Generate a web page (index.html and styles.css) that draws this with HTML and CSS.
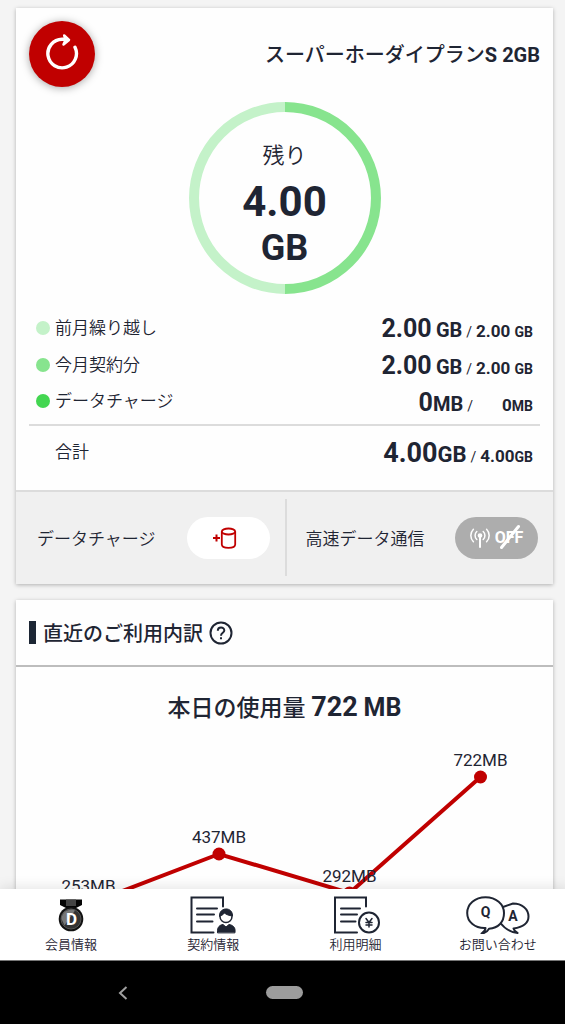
FILE: index.html
```html
<!DOCTYPE html>
<html lang="ja">
<head>
<meta charset="utf-8">
<meta name="viewport" content="width=device-width, initial-scale=1">
<title>データ残量</title>
<link rel="stylesheet" href="styles.css">
</head>
<body>
<main class="content">
  <section class="card">
    <div class="plan">
      <header class="plan-head">
        <button class="refresh" type="button" aria-label="更新">
          <svg width="34" height="38" viewBox="0 0 34 38" fill="none" stroke="#fff" stroke-width="3.4" stroke-linecap="round" stroke-linejoin="round">
            <path d="M30 14.2A14.3 14.3 0 1 1 17 6.200H21"/>
            <path d="M19.200 2.500L24 7L18.500 11.500L20.500 7Z" fill="#fff" stroke-width="2.500"/>
          </svg>
        </button>
        <h1 class="plan-name">スーパーホーダイプラン<b>S 2GB</b></h1>
      </header>
      <div class="donut">
        <svg class="donut-ring" width="192" height="192" viewBox="0 0 192 192" fill="none" stroke-width="10">
          <path d="M96 187A91 91 0 0 1 96 5" stroke="#c4f2c9"/>
          <path d="M96 5A91 91 0 0 1 96 187" stroke="#87e48e"/>
        </svg>
        <p class="donut-text">
          <span class="donut-label">残り</span>
          <span class="donut-value">4.00</span>
          <span class="donut-unit">GB</span>
        </p>
      </div>
      <table class="usage">
        <tbody>
          <tr><th scope="row"><span class="dot dot-carry"></span>前月繰り越し</th><td><b class="num">2.00</b> <b class="unit">GB</b><span class="slash">/</span><span class="cap">2.00 <small>GB</small></span></td></tr>
          <tr><th scope="row"><span class="dot dot-month"></span>今月契約分</th><td><b class="num">2.00</b> <b class="unit">GB</b><span class="slash">/</span><span class="cap">2.00 <small>GB</small></span></td></tr>
          <tr><th scope="row"><span class="dot dot-charge"></span>データチャージ</th><td><b class="num">0</b><b class="unit">MB</b><span class="slash">/</span><span class="cap">0<small>MB</small></span></td></tr>
        </tbody>
        <tfoot>
          <tr><th scope="row"><span class="dot"></span>合計</th><td><b class="num">4.00</b><b class="unit">GB</b><span class="slash">/</span><span class="cap">4.00<small>GB</small></span></td></tr>
        </tfoot>
      </table>
    </div>
    <div class="actions">
      <div class="action">
        <span id="charge-label">データチャージ</span>
        <button class="pill" type="button" aria-labelledby="charge-label">
          <svg width="26" height="22" viewBox="0 0 26 22" fill="none" stroke="#c00000" stroke-width="1.8">
            <path d="M1 11H8M4.500 7.500V14.500" stroke-width="2"/>
            <ellipse cx="16.500" cy="4.500" rx="6.700" ry="3"/>
            <path d="M9.800 4.500V17.500C9.800 19.500 12.500 20.800 16.500 20.800S23.200 19.500 23.200 17.500V4.500"/>
          </svg>
        </button>
      </div>
      <div class="action">
        <span id="speed-label">高速データ通信</span>
        <button class="pill pill-off" type="button" aria-labelledby="speed-label" aria-pressed="false">
          <svg width="20" height="20" viewBox="0 0 20 20" fill="none" stroke="#fff" stroke-width="1.500" stroke-linecap="round">
            <path d="M10 8V19" stroke-width="2"/><circle cx="10" cy="7.500" r="1.600" fill="#fff"/>
            <path d="M6.800 3.500A5.500 5.500 0 0 0 6.800 11.500M13.200 3.500A5.500 5.500 0 0 1 13.200 11.500M3.400 1.200A9 9 0 0 0 3.400 13.800M16.600 1.200A9 9 0 0 1 16.600 13.800"/>
          </svg>
          <span class="off">OFF
            <svg class="off-line" width="22" height="26" viewBox="0 0 22 26"><path d="M2.500 23.500L19.500 2.500" stroke="#fff" stroke-width="3" stroke-linecap="round"/></svg>
          </span>
        </button>
      </div>
    </div>
  </section>

  <section class="card">
    <h2 class="section-title">直近のご利用内訳
      <button class="help" type="button" aria-label="ヘルプ">
        <svg width="24" height="24" viewBox="0 0 24 24" fill="none" stroke="#1f2533" stroke-width="2">
          <circle cx="12" cy="12" r="10.500"/>
          <path d="M8.800 9.800C8.800 5.400 15.300 5.600 15.300 9.400C15.300 11.800 12 11.900 12 14.700"/>
          <path d="M12 16.200V18.300"/>
        </svg>
      </button>
    </h2>
    <p class="today">本日の使用量 <b class="today-num">722</b> <b class="today-unit">MB</b></p>
    <svg class="chart" viewBox="0 0 537 200" role="img" aria-label="日別の使用量">
      <polyline points="72.500,168 203,118 333.500,157 464.500,41"/>
      <circle cx="72.500" cy="168" r="6.500"/><circle cx="203" cy="118" r="6.500"/><circle cx="333.500" cy="157" r="6.500"/><circle cx="464.500" cy="41" r="6.500"/>
      <text x="72.500" y="156">253MB</text><text x="203" y="107">437MB</text><text x="333.500" y="146">292MB</text><text x="464.500" y="30">722MB</text>
    </svg>
  </section>
</main>

<nav class="tabs">
  <a class="tab" href="#member">
    <svg width="26" height="38" viewBox="0 0 26 38">
      <path d="M2 3.500H24V9L18 12H8L2 9Z" fill="#050505"/><path d="M8 3.500H18V10H8Z" fill="#444"/>
      <circle cx="13" cy="23" r="12.300" fill="#111"/><circle cx="13" cy="23" r="10" fill="#333" stroke="#555" stroke-width="1"/>
      <path d="M3.500 23A9.500 9.500 0 0 1 17 14.500L6.500 29.500Z" fill="#777"/>
      <text class="medal-text" x="13.500" y="29">D</text>
    </svg>
    会員情報
  </a>
  <a class="tab" href="#contract">
    <svg width="46" height="38" viewBox="0 0 46 38" fill="none" stroke="#1f2533" stroke-width="2" stroke-linecap="round">
      <path d="M33 10.500V1.500H1.500V36.500H23.500"/><path d="M7 12.500H27M7 18.500H24M7 25.500H22.500"/>
      <circle cx="36" cy="20.500" r="6" fill="#fff" stroke-width="1.500"/>
      <path d="M29.500 20C29 10.500 43 10.500 42.500 20C39 19.500 36 18.500 34.500 17C33 19 31 19.800 29.500 20Z" fill="#1f2533" stroke-width="1"/>
      <path d="M27.500 36.500C27 30.500 30 29 33 28.500L36 31L39 28.500C42 29 46 30.500 45 36.500Z" fill="#1f2533" stroke-width="1"/>
    </svg>
    契約情報
  </a>
  <a class="tab" href="#billing">
    <svg width="48" height="38" viewBox="0 0 48 38" fill="none" stroke="#1f2533" stroke-width="2" stroke-linecap="round">
      <path d="M34 10.500V1.500H3V36.500H25"/><path d="M9 12.500H28M9 18.500H25M9 25.500H23.500"/>
      <circle cx="37" cy="26.500" r="10" fill="#fff"/>
      <path d="M34 22.500L37 26.500L40 22.500M37 26.500V31M34 26.500H40M34 29H40" stroke-width="1.500"/>
    </svg>
    利用明細
  </a>
  <a class="tab" href="#contact">
    <svg width="64" height="38" viewBox="0 0 64 38" fill="#fff" stroke="#1f2533" stroke-width="2" stroke-linejoin="round">
      <path d="M47 7.500C56 7.500 62.500 13 62.500 20.500C62.500 26.500 58 31 47.500 32.500C48 34.500 49.500 36 51.500 37C45 36.500 39 33 34 26.500L37 11Z"/>
      <path d="M19.500 1.200C30 1.200 38 8 38 17C38 26 32.500 32 23 32.800C21.500 35.500 19 37.200 15.500 37.500C18 36 19.500 34 19.500 32C9 32.500 1.200 26 1.200 17C1.200 8 9 1.200 19.500 1.200Z"/>
      <text class="qa" x="19.500" y="21">Q</text><text class="qa" x="47" y="25">A</text>
    </svg>
    お問い合わせ
  </a>
</nav>

<footer class="system">
  <button class="back" type="button" aria-label="戻る">
    <svg width="12" height="14" viewBox="0 0 12 14" fill="none" stroke="#a0a0a0" stroke-width="2"><path d="M9.500 1L3 7L9.500 13"/></svg>
  </button>
  <button class="home" type="button" aria-label="ホーム"></button>
</footer>
</body>
</html>
```
FILE: styles.css
```css
* { box-sizing: border-box; }
html { overflow: hidden; }
body {
  display: flex;
  flex-direction: column;
  height: 100vh;
  margin: 0 -4px 0 0;
  background: #f4f4f4;
  color: #1f2533;
  font-family: Roboto, "Noto Sans CJK JP", sans-serif;
  font-size: 17px;
}
svg { display: block; flex: none; }
button {
  padding: 0;
  border: 0;
  background: none;
  color: inherit;
  font: inherit;
}
h1, h2, p { margin: 0; }

.content {
  display: flex;
  flex: 1;
  flex-direction: column;
  gap: 16px;
  min-height: 0;
  padding: 8px 16px 0;
  overflow-y: auto;
  scrollbar-width: none;
}
.card {
  flex: none;
  background: #fefefe;
  box-shadow: 0 1px 4px rgba(0, 0, 0, .28);
}

.plan { padding: 13px 13px 12px; }
.plan-head {
  display: flex;
  align-items: center;
  justify-content: space-between;
}
.refresh {
  display: grid;
  place-items: center;
  width: 66px;
  height: 66px;
  padding-bottom: 4px;
  border-radius: 50%;
  background: #c00000;
  box-shadow: 0 1px 8px rgba(0, 0, 0, .35);
}
.plan-name {
  padding-top: 2px;
  font-size: 20px;
  font-weight: 500;
  line-height: 30px;
}
.plan-name b { font-weight: 700; }

.donut {
  display: grid;
  place-items: center;
  margin: 15px 0;
}
.donut > * { grid-area: 1 / 1; }
.donut-text {
  display: flex;
  flex-direction: column;
  padding-top: 7px;
  font-weight: 700;
  line-height: 46px;
  text-align: center;
}
.donut-label { font-size: 22px; font-weight: 350; }
.donut-value { font-size: 42px; }
.donut-unit { font-size: 36px; }

.usage {
  width: 100%;
  border-collapse: collapse;
}
.usage tr { height: 37px; }
.usage th, .usage td { padding: 0 7px; line-height: 26px; }
.usage th { font-weight: 350; text-align: left; }
.usage td { padding-top: 6px; text-align: right; }
.usage tbody tr:last-child { height: 42px; }
.usage tbody tr:last-child > * { padding-bottom: 5px; }
.usage tfoot { border-top: 2px solid #dcdcdc; }
.usage tfoot tr { height: 53px; }
.dot {
  display: inline-block;
  width: 14px;
  height: 14px;
  margin-right: 5px;
  border-radius: 50%;
  vertical-align: -1px;
}
.dot-carry { background: #c4f2c9; }
.dot-month { background: #87e48e; }
.dot-charge { background: #43d651; }
.num { font-size: 25px; }
.unit { font-size: 20px; }
.usage tfoot .num { font-size: 27px; }
.usage tfoot .unit { font-size: 22px; }
.slash { margin: 0 4px; font-size: 14px; }
.cap {
  display: inline-block;
  min-width: 56px;
  font-weight: 700;
}
.usage tfoot .cap { min-width: 0; }
.cap small { font-size: 14px; }

.actions {
  display: grid;
  grid-template-columns: 1fr 1fr;
  padding: 7px 0 8px;
  border-top: 2px solid #dcdcdc;
  background: #f0f0f0;
}
.action {
  display: flex;
  align-items: center;
  justify-content: space-between;
  height: 77px;
  padding: 0 15px 0 21px;
  font-weight: 350;
}
.action + .action { border-left: 2px solid #dcdcdc; padding-left: 19px; }
.pill {
  display: flex;
  align-items: center;
  justify-content: center;
  gap: 5px;
  width: 83px;
  height: 42px;
  padding-right: 6px;
  border-radius: 21px;
  background: #fff;
}
.pill-off { padding-right: 0; background: #adadad; color: #fff; }
.off { position: relative; font-size: 16px; font-weight: 700; }
.off-line { position: absolute; top: -4px; left: 4px; }

.section-title {
  display: flex;
  align-items: center;
  gap: 6px;
  height: 67px;
  padding: 0 13px;
  border-bottom: 2px solid #bdbdbd;
  font-size: 20px;
  font-weight: 500;
}
.section-title::before {
  width: 7px;
  height: 23px;
  margin-right: 1px;
  background: #1c2634;
  content: "";
}
.today {
  padding-top: 20px;
  font-size: 23px;
  font-weight: 500;
  line-height: 40px;
  text-align: center;
}
.today-num { font-size: 27px; }
.today-unit { font-size: 25px; }
.chart {
  width: 100%;
  margin-top: 7px;
}
.chart polyline { fill: none; stroke: #c00000; stroke-width: 4; }
.chart circle { fill: #c00000; }
.chart text { fill: #1f2533; font-size: 17px; text-anchor: middle; }

.tabs {
  display: grid;
  flex: none;
  grid-template-columns: repeat(4, 1fr);
  height: 72px;
  padding-top: 7px;
  border-bottom: 1px solid #777;
  background: #fff;
  box-shadow: 0 -2px 12px rgba(0, 0, 0, .1);
  z-index: 1;
}
.tab {
  display: flex;
  flex-direction: column;
  align-items: center;
  color: inherit;
  font-size: 13px;
  font-weight: 350;
  line-height: 22px;
  text-decoration: none;
}
.medal-text {
  fill: #fff;
  font-size: 17px;
  font-weight: 700;
  text-anchor: middle;
}
.qa {
  fill: #1f2533;
  stroke: none;
  font-size: 14px;
  font-weight: 700;
  text-anchor: middle;
}

.system {
  display: grid;
  flex: none;
  grid-template-columns: 1fr auto 1fr;
  align-items: center;
  height: 63px;
  background: #000;
}
.back { justify-self: center; padding-right: 20px; }
.home {
  width: 37px;
  height: 13px;
  border-radius: 7px;
  background: #9c9c9c;
}
```
